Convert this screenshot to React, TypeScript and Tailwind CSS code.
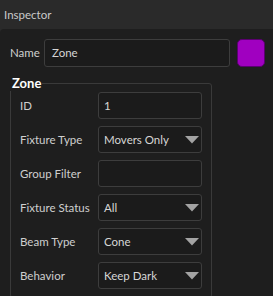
import React from "react";

const font = { fontFamily: 'Lato, "Noto Sans", sans-serif' };

function Caret() {
  return (
    <svg width="14" height="8" viewBox="0 0 14 8" className="shrink-0">
      <polygon points="0,0 14,0 7,7.5" fill="#a3a3a3" />
    </svg>
  );
}

function Field({ label, value, select }: { label: string; value?: string; select?: boolean }) {
  return (
    <div className="flex items-center h-[27px]">
      <div className="w-[78px] text-[11.5px] text-[#cfcfcf] leading-none pt-[1px]">{label}</div>
      <div className="w-[104px] h-[27px] rounded-[3px] border border-[#3d3d3d] bg-[#1b1b1b] flex items-center pl-[5px] pr-[2px] text-[11.5px] text-[#d6d6d6]">
        <span className="flex-1">{value}</span>
        {select && <Caret />}
      </div>
    </div>
  );
}

export default function App() {
  return (
    <div className="w-[273px] h-[296px] overflow-hidden bg-[#2a2a2a] flex flex-col" style={font}>
      <div className="h-[29px] shrink-0 flex items-center pl-[4px] text-[11.5px] text-[#c9c9c9]">Inspector</div>
      <div className="flex-1 bg-[#1e1e1e] rounded-tl-[4px] pt-[10px] pl-[10px]">
        <div className="flex items-center h-[28px]">
          <div className="w-[34px] text-[11.5px] text-[#cfcfcf]">Name</div>
          <div className="w-[186px] h-[28px] rounded-[3px] border border-[#3d3d3d] bg-[#1b1b1b] flex items-center pl-[7px] text-[11.5px] text-[#d6d6d6]">
            Zone
          </div>
          <div className="ml-[7px] w-[28px] h-[28px] rounded-[5px] bg-[#a000c0] border border-[#5a0070]" />
        </div>
        <fieldset className="mt-[8px] w-[202px] border border-[#3a3a3a] rounded-[3px] pl-[9px] pt-[1px] pb-[8px]">
          <legend className="-ml-[10px] pl-[2px] pr-[1px] text-[13px] font-bold text-white leading-[16px]">Zone</legend>
          <div className="flex flex-col gap-[7px]">
            <Field label="ID" value="1" />
            <Field label="Fixture Type" value="Movers Only" select />
            <Field label="Group Filter" value="" />
            <Field label="Fixture Status" value="All" select />
            <Field label="Beam Type" value="Cone" select />
            <Field label="Behavior" value="Keep Dark" select />
          </div>
        </fieldset>
      </div>
    </div>
  );
}
